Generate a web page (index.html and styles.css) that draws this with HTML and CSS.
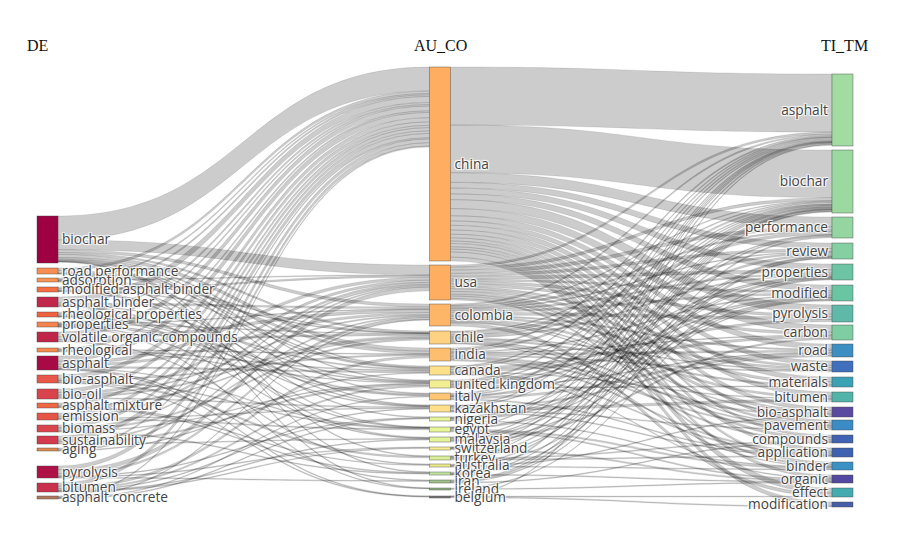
FILE: index.html
```html
<!DOCTYPE html>
<html>
<head>
<meta charset="utf-8">
<title>Sankey DE AU_CO TI_TM</title>
<link rel="stylesheet" href="styles.css">
</head>
<body>
<div class="chart">
  <svg id="sankey" class="sankey" width="904" height="533" viewBox="0 0 904 533" xmlns="http://www.w3.org/2000/svg">
    <g class="headers">
      <text class="hdr" x="27" y="51">DE</text>
      <text class="hdr" x="414" y="51">AU_CO</text>
      <text class="hdr" x="821" y="51">TI_TM</text>
    </g>
    <g id="links" class="links"></g>
    <g id="nodes" class="nodes"></g>
    <g id="labels" class="labels"></g>
  </svg>
</div>
<script src="script.js"></script>
</body>
</html>
```

FILE: styles.css
```css
html, body {
  margin: 0;
  padding: 0;
  background: #ffffff;
}
.chart {
  width: 904px;
  height: 533px;
  overflow: hidden;
}
.sankey {
  display: block;
}
.hdr {
  font-family: "Liberation Serif", "Times New Roman", serif;
  font-size: 16px;
  fill: #111111;
}
.link {
  fill: rgba(0, 0, 0, 0.2);
  stroke: rgba(0, 0, 0, 0.22);
  stroke-width: 0.45;
}
.node {
  stroke: #444444;
  stroke-width: 0.6;
  stroke-opacity: 0.7;
}
.lbl {
  font-family: "Open Sans", "DejaVu Sans", sans-serif;
  font-size: 13.7px;
  fill: #444444;
  text-shadow: 1px 1px 1px #fff, -1px -1px 1px #fff, 1px -1px 1px #fff, -1px 1px 1px #fff;
}
.lbl-end {
  text-anchor: end;
}
```

FILE: script.js
```js
(function () {
  var NS = "http://www.w3.org/2000/svg";
  var NW = 21;
  var X = [37, 429.5, 832];

  var cols = [
    [
      ["biochar", 216, 263, "#9e0142"],
      ["road performance", 268, 274, "#f98e52"],
      ["adsorption", 278, 282, "#f99455"],
      ["modified asphalt binder", 287, 292, "#f46d43"],
      ["asphalt binder", 297, 307, "#c1274a"],
      ["rheological properties", 312, 317, "#f0623f"],
      ["properties", 322, 327, "#f7844e"],
      ["volatile organic compounds", 332, 342, "#c0254a"],
      ["rheological", 348, 352, "#f58a4e"],
      ["asphalt", 356, 370, "#a70a44"],
      ["bio-asphalt", 375, 383, "#e9574a"],
      ["bio-oil", 389, 399, "#d8434e"],
      ["asphalt mixture", 403, 408, "#f06744"],
      ["emission", 413, 420, "#e65446"],
      ["biomass", 425, 432, "#da464c"],
      ["sustainability", 436, 444, "#d3394f"],
      ["aging", 448, 451, "#dc8a50"],
      ["pyrolysis", 466, 478, "#ad1146"],
      ["bitumen", 483, 492, "#c9304c"],
      ["asphalt concrete", 496, 499, "#b07a5a"]
    ],
    [
      ["china", 67, 261, "#fdae61"],
      ["usa", 265, 300, "#fdae61"],
      ["colombia", 304, 326, "#fdb567"],
      ["chile", 331, 344, "#fed283"],
      ["india", 348, 361, "#fdbf6f"],
      ["canada", 366, 375, "#fee08b"],
      ["united kingdom", 380, 388, "#f3ee93"],
      ["italy", 393, 400, "#fdc574"],
      ["kazakhstan", 405, 412, "#fee08b"],
      ["nigeria", 417, 421, "#e6f598"],
      ["egypt", 427, 432, "#e6f598"],
      ["malaysia", 437, 442, "#e2f39a"],
      ["switzerland", 447, 450, "#f6ee90"],
      ["turkey", 456, 460, "#d9ef9b"],
      ["australia", 464, 467, "#eeea8e"],
      ["korea", 472, 475, "#c2e3a0"],
      ["iran", 480, 483, "#9fc08a"],
      ["ireland", 488, 490, "#8fb07e"],
      ["belgium", 496, 498, "#777777"]
    ],
    [
      ["asphalt", 74, 146, "#a3dca2"],
      ["biochar", 150, 213, "#9bd9a0"],
      ["performance", 217, 238, "#95d5a1"],
      ["review", 243, 259, "#85d0a3"],
      ["properties", 264, 280, "#6cc4a4"],
      ["modified", 285, 301, "#6ac5a3"],
      ["pyrolysis", 305, 322, "#5fb9a9"],
      ["carbon", 325, 340, "#7fcda2"],
      ["road", 344, 357, "#3d8ec1"],
      ["waste", 361, 372, "#3f6fbd"],
      ["materials", 377, 387, "#3da1b6"],
      ["bitumen", 392, 402, "#52b3a9"],
      ["bio-asphalt", 407, 417, "#5b4ba0"],
      ["pavement", 420, 430, "#3b8bc5"],
      ["compounds", 435, 443, "#4163b1"],
      ["application", 448, 457, "#3e62b0"],
      ["binder", 462, 470, "#3a91c4"],
      ["organic", 475, 483, "#5349a1"],
      ["effect", 488, 497, "#45abb0"],
      ["modification", 502, 507, "#4460a8"]
    ]
  ];

  function mulberry32(a) {
    return function () {
      a |= 0; a = (a + 0x6D2B79F5) | 0;
      var t = Math.imul(a ^ (a >>> 15), 1 | a);
      t = (t + Math.imul(t ^ (t >>> 7), 61 | t)) ^ t;
      return ((t ^ (t >>> 14)) >>> 0) / 4294967296;
    };
  }
  var rnd = mulberry32(20240607);

  function h(n) { return n[2] - n[1]; }
  function c(n) { return (n[1] + n[2]) / 2; }

  function pick(weights, exclude) {
    var tot = 0, i;
    for (i = 0; i < weights.length; i++) if (!exclude[i]) tot += weights[i];
    var r = rnd() * tot;
    for (i = 0; i < weights.length; i++) {
      if (exclude[i]) continue;
      r -= weights[i];
      if (r <= 0) return i;
    }
    for (i = weights.length - 1; i >= 0; i--) if (!exclude[i]) return i;
    return -1;
  }

  function ipf(m, rows, colsum, iters) {
    var i, j, s;
    for (var k = 0; k < iters; k++) {
      for (i = 0; i < m.length; i++) {
        s = 0;
        for (j = 0; j < m[i].length; j++) s += m[i][j];
        if (s > 0) for (j = 0; j < m[i].length; j++) m[i][j] *= rows[i] / s;
      }
      for (j = 0; j < colsum.length; j++) {
        s = 0;
        for (i = 0; i < m.length; i++) s += m[i][j];
        if (s > 0) for (i = 0; i < m.length; i++) m[i][j] *= colsum[j] / s;
      }
    }
    return m;
  }

  var L = cols[0], M = cols[1], R = cols[2];

  /* left -> middle */
  var capM = [80, 26, 16, 9, 10, 7, 7, 4, 4, 2, 3, 3, 2, 2, 1.5, 2, 1.5, 1, 1];
  var seedLM = L.map(function (n, i) {
    var row = M.map(function () { return 0; });
    if (i === 0) {
      var base = [12, 5, 2.5, 1.5, 1.5, 1, 1, 0.6, 0.6];
      for (var j = 0; j < M.length; j++) row[j] = j < base.length ? base[j] : 0.3;
    } else {
      row[0] = 1.0;
      var k = 3 + Math.floor(rnd() * 5);
      var ex = M.map(function (_, j) { return j === 0; });
      var w = capM.map(function (v) { return Math.sqrt(v); });
      for (var t = 0; t < k; t++) {
        var p = pick(w, ex);
        if (p < 0) break;
        ex[p] = true;
        row[p] = 0.2 + rnd() * 1.0;
      }
    }
    return row;
  });
  var mLM = ipf(seedLM, L.map(h), capM, 600);

  /* middle -> right */
  var hM = M.map(h), hR = R.map(h);
  var sM = hM.reduce(function (a, b) { return a + b; }, 0);
  var sR = hR.reduce(function (a, b) { return a + b; }, 0);
  var capR = hR.map(function (v) { return v * sM / sR; });
  var seedMR = M.map(function (n, i) {
    var row = R.map(function () { return 0; });
    if (i === 0) {
      for (var j = 0; j < R.length; j++) row[j] = hR[j] * (j < 2 ? 3 : 1);
    } else {
      var k = Math.min(14, Math.round(3 + hM[i] * 0.45));
      var ex = R.map(function () { return false; });
      for (var t = 0; t < k; t++) {
        var p = pick(hR, ex);
        if (p < 0) break;
        ex[p] = true;
        row[p] = 0.3 + rnd();
      }
    }
    return row;
  });
  var mMR = ipf(seedMR, hM, capR, 600);

  function buildLinks(srcCol, tgtCol, mat, x0, x1) {
    var links = [];
    mat.forEach(function (row, i) {
      row.forEach(function (v, j) {
        if (v > 0.25) links.push({ s: i, t: j, w: v });
      });
    });
    var soff = srcCol.map(function (n) { return n[1]; });
    var toff = tgtCol.map(function (n) { return n[1]; });
    srcCol.forEach(function (n, i) {
      links.filter(function (l) { return l.s === i; })
        .sort(function (a, b) { return c(tgtCol[a.t]) - c(tgtCol[b.t]); })
        .forEach(function (l) { l.sy = soff[i]; soff[i] += l.w; });
    });
    tgtCol.forEach(function (n, j) {
      links.filter(function (l) { return l.t === j; })
        .sort(function (a, b) { return c(srcCol[a.s]) - c(srcCol[b.s]); })
        .forEach(function (l) { l.ty = toff[j]; toff[j] += l.w; });
    });
    links.forEach(function (l) { l.x0 = x0; l.x1 = x1; });
    return links;
  }

  var all = buildLinks(L, M, mLM, X[0] + NW, X[1])
    .concat(buildLinks(M, R, mMR, X[1] + NW, X[2]));

  var gL = document.getElementById("links");
  all.forEach(function (l) {
    var w = Math.max(l.w, 0.9);
    var pad = (w - l.w) / 2;
    var sy0 = l.sy - pad, ty0 = l.ty - pad;
    var xm = (l.x0 + l.x1) / 2;
    var d = "M" + l.x0 + "," + sy0.toFixed(2) +
      " C" + xm + "," + sy0.toFixed(2) + " " + xm + "," + ty0.toFixed(2) + " " + l.x1 + "," + ty0.toFixed(2) +
      " L" + l.x1 + "," + (ty0 + w).toFixed(2) +
      " C" + xm + "," + (ty0 + w).toFixed(2) + " " + xm + "," + (sy0 + w).toFixed(2) + " " + l.x0 + "," + (sy0 + w).toFixed(2) + " Z";
    var p = document.createElementNS(NS, "path");
    p.setAttribute("class", "link");
    p.setAttribute("d", d);
    gL.appendChild(p);
  });

  var gN = document.getElementById("nodes");
  var gT = document.getElementById("labels");
  cols.forEach(function (col, ci) {
    col.forEach(function (n) {
      var r = document.createElementNS(NS, "rect");
      r.setAttribute("class", "node");
      r.setAttribute("x", X[ci]);
      r.setAttribute("y", n[1]);
      r.setAttribute("width", NW);
      r.setAttribute("height", Math.max(n[2] - n[1], 1));
      r.setAttribute("fill", n[3]);
      gN.appendChild(r);

      var t = document.createElementNS(NS, "text");
      t.setAttribute("class", ci === 2 ? "lbl lbl-end" : "lbl");
      t.setAttribute("x", ci === 2 ? X[ci] - 4 : X[ci] + NW + 4);
      t.setAttribute("y", c(n));
      t.setAttribute("dy", "0.35em");
      t.textContent = n[0];
      gT.appendChild(t);
    });
  });
})();
```
